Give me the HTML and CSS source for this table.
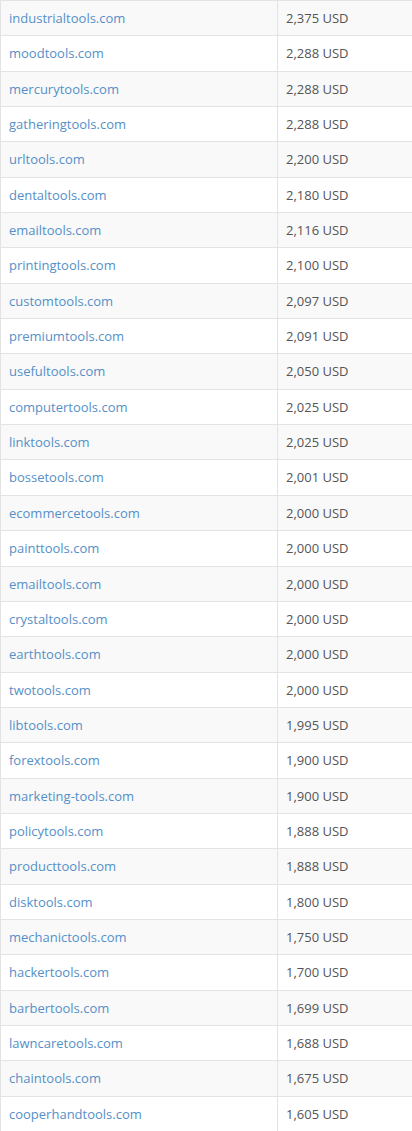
FILE: index.html
```html
<!DOCTYPE html>
<html>
<head>
<meta charset="utf-8">
<link rel="stylesheet" href="styles.css">
</head>
<body>
<table class="domains">
<tbody>
<tr><td class="name"><a href="#">industrialtools.com</a></td><td class="price">2,375 USD</td></tr>
<tr><td class="name"><a href="#">moodtools.com</a></td><td class="price">2,288 USD</td></tr>
<tr><td class="name"><a href="#">mercurytools.com</a></td><td class="price">2,288 USD</td></tr>
<tr><td class="name"><a href="#">gatheringtools.com</a></td><td class="price">2,288 USD</td></tr>
<tr><td class="name"><a href="#">urltools.com</a></td><td class="price">2,200 USD</td></tr>
<tr><td class="name"><a href="#">dentaltools.com</a></td><td class="price">2,180 USD</td></tr>
<tr><td class="name"><a href="#">emailtools.com</a></td><td class="price">2,116 USD</td></tr>
<tr><td class="name"><a href="#">printingtools.com</a></td><td class="price">2,100 USD</td></tr>
<tr><td class="name"><a href="#">customtools.com</a></td><td class="price">2,097 USD</td></tr>
<tr><td class="name"><a href="#">premiumtools.com</a></td><td class="price">2,091 USD</td></tr>
<tr><td class="name"><a href="#">usefultools.com</a></td><td class="price">2,050 USD</td></tr>
<tr><td class="name"><a href="#">computertools.com</a></td><td class="price">2,025 USD</td></tr>
<tr><td class="name"><a href="#">linktools.com</a></td><td class="price">2,025 USD</td></tr>
<tr><td class="name"><a href="#">bossetools.com</a></td><td class="price">2,001 USD</td></tr>
<tr><td class="name"><a href="#">ecommercetools.com</a></td><td class="price">2,000 USD</td></tr>
<tr><td class="name"><a href="#">painttools.com</a></td><td class="price">2,000 USD</td></tr>
<tr><td class="name"><a href="#">emailtools.com</a></td><td class="price">2,000 USD</td></tr>
<tr><td class="name"><a href="#">crystaltools.com</a></td><td class="price">2,000 USD</td></tr>
<tr><td class="name"><a href="#">earthtools.com</a></td><td class="price">2,000 USD</td></tr>
<tr><td class="name"><a href="#">twotools.com</a></td><td class="price">2,000 USD</td></tr>
<tr><td class="name"><a href="#">libtools.com</a></td><td class="price">1,995 USD</td></tr>
<tr><td class="name"><a href="#">forextools.com</a></td><td class="price">1,900 USD</td></tr>
<tr><td class="name"><a href="#">marketing-tools.com</a></td><td class="price">1,900 USD</td></tr>
<tr><td class="name"><a href="#">policytools.com</a></td><td class="price">1,888 USD</td></tr>
<tr><td class="name"><a href="#">producttools.com</a></td><td class="price">1,888 USD</td></tr>
<tr><td class="name"><a href="#">disktools.com</a></td><td class="price">1,800 USD</td></tr>
<tr><td class="name"><a href="#">mechanictools.com</a></td><td class="price">1,750 USD</td></tr>
<tr><td class="name"><a href="#">hackertools.com</a></td><td class="price">1,700 USD</td></tr>
<tr><td class="name"><a href="#">barbertools.com</a></td><td class="price">1,699 USD</td></tr>
<tr><td class="name"><a href="#">lawncaretools.com</a></td><td class="price">1,688 USD</td></tr>
<tr><td class="name"><a href="#">chaintools.com</a></td><td class="price">1,675 USD</td></tr>
<tr><td class="name"><a href="#">cooperhandtools.com</a></td><td class="price">1,605 USD</td></tr>
</tbody>
</table>
</body>
</html>
```
FILE: styles.css
```css
html, body {
  margin: 0;
  padding: 0;
  background: #ffffff;
}

body {
  font-family: "Open Sans", "Liberation Sans", sans-serif;
  font-size: 13px;
  color: #555555;
}

.domains {
  width: 412px;
  border-collapse: collapse;
  border-spacing: 0;
  table-layout: fixed;
}

.domains tr:nth-child(odd) {
  background: #f9f9f9;
}

.domains td {
  padding: 8px 8px 8px 8px;
  height: 18.35px;
  line-height: 18.35px;
  border-top: 1px solid #e3e3e3;
  border-left: 1px solid #e3e3e3;
  vertical-align: middle;
  white-space: nowrap;
}

.domains .name {
  width: 260px;
}

.domains a {
  color: #5590c8;
  text-decoration: none;
}

.domains .price {
  color: #555555;
}
```
